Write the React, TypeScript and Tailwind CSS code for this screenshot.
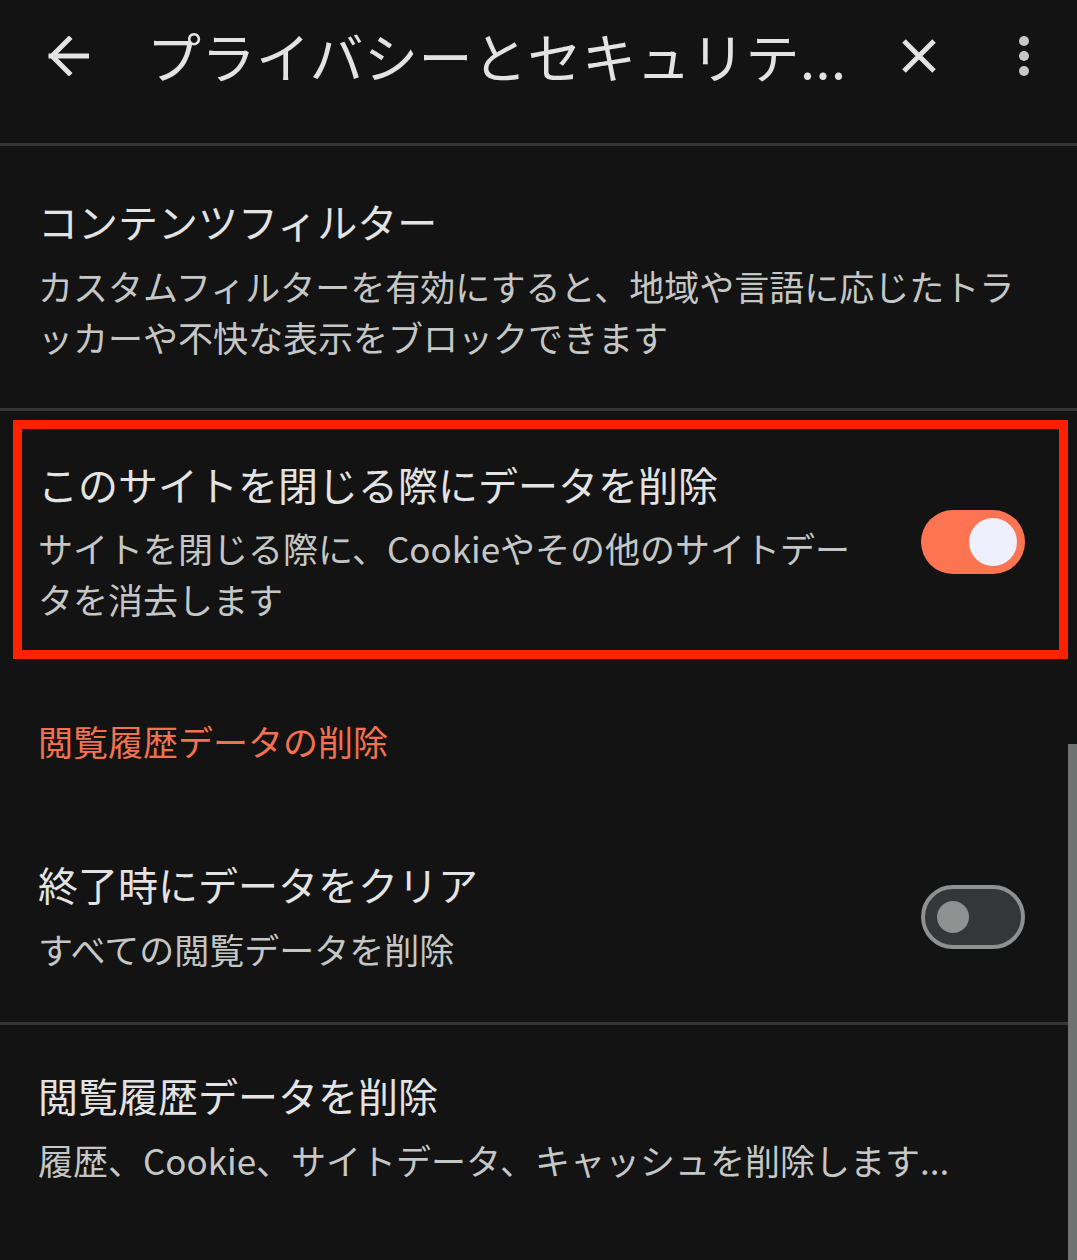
const FONT = "font-['Noto_Sans_CJK_JP','Noto_Sans',sans-serif]";

function Toggle({ on }: { on: boolean }) {
  if (on) {
    return (
      <div className="flex h-[64px] w-[104px] shrink-0 items-center justify-end rounded-full bg-[#fd7452] pr-[8px]">
        <div className="h-[48px] w-[48px] rounded-full bg-[#eff0fe]" />
      </div>
    );
  }
  return (
    <div className="flex h-[64px] w-[104px] shrink-0 items-center rounded-full border-[4px] border-[#8e918f] bg-[#353638] pl-[12px]">
      <div className="h-[32px] w-[32px] rounded-full bg-[#8e918f]" />
    </div>
  );
}

function Divider() {
  return <div className="h-[3px] w-full bg-[#363636]" />;
}

export default function App() {
  return (
    <main className={`relative min-h-[1260px] w-full overflow-hidden bg-[#131313] ${FONT}`}>
      <header className="flex h-[112px] items-center">
        <svg
          className="ml-[47px] shrink-0"
          width="42"
          height="40"
          viewBox="0 0 42 40"
          fill="none"
          stroke="#e3e3e3"
          strokeWidth="5"
          strokeLinecap="square"
        >
          <path d="M4 20 H40" />
          <path d="M22 3 L5 20 L22 37" />
        </svg>
        <h1 className="ml-[58px] w-[700px] shrink-0 whitespace-nowrap text-[54px] leading-[112px] tracking-[0.5px] text-[#e3e3e3]">
          プライバシーとセキュリテ...
        </h1>
        <svg
          className="ml-[54px] shrink-0"
          width="36"
          height="36"
          viewBox="0 0 36 36"
          fill="none"
          stroke="#e3e3e3"
          strokeWidth="5"
        >
          <path d="M3 3 L33 33 M33 3 L3 33" />
        </svg>
        <svg className="ml-[81px] shrink-0" width="12" height="42" viewBox="0 0 12 42" fill="#c8c8c8">
          <circle cx="6" cy="6" r="5" />
          <circle cx="6" cy="21" r="5" />
          <circle cx="6" cy="36" r="5" />
        </svg>
      </header>
      <div className="h-[31px]" />
      <Divider />

      <section className="pb-[46px] pl-[38px] pr-[40px] pt-[47px]">
        <h2 className="text-[40px] leading-[56px] text-[#e3e3e3]">コンテンツフィルター</h2>
        <p className="mt-[11px] text-[35px] leading-[51px] text-[#c4c7c5]">
          カスタムフィルターを有効にすると、地域や言語に応じたトラッカーや不快な表示をブロックできます
        </p>
      </section>
      <Divider />

      <div className="ml-[13px] mr-[9px] mt-[9px] border-[9px] border-[#ff2200]">
        <div className="flex items-center pb-[26px] pl-[16px] pr-[34px] pt-[27px]">
          <div className="w-[827px] shrink-0">
            <h2 className="text-[40px] leading-[56px] text-[#e3e3e3]">
              このサイトを閉じる際にデータを削除
            </h2>
            <p className="mt-[10px] text-[35px] leading-[51px] text-[#c4c7c5]">
              サイトを閉じる際に、Cookieやその他のサイトデータを消去します
            </p>
          </div>
          <div className="ml-auto pt-[3px]">
            <Toggle on />
          </div>
        </div>
      </div>

      <h3 className="mt-[57px] pl-[38px] text-[35px] leading-[50px] text-[#f4714f]">
        閲覧履歴データの削除
      </h3>

      <section className="flex items-center pb-[48px] pl-[38px] pr-[52px] pt-[90px]">
        <div className="flex-1">
          <h2 className="text-[40px] leading-[56px] text-[#e3e3e3]">終了時にデータをクリア</h2>
          <p className="mt-[11px] text-[35px] leading-[51px] text-[#c4c7c5]">すべての閲覧データを削除</p>
        </div>
        <div className="pt-[3px]">
          <Toggle on={false} />
        </div>
      </section>
      <Divider />

      <section className="pl-[38px] pr-[40px] pt-[42px]">
        <h2 className="text-[40px] leading-[56px] text-[#e3e3e3]">閲覧履歴データを削除</h2>
        <p className="mt-[11px] text-[35px] leading-[51px] text-[#c4c7c5]">
          履歴、Cookie、サイトデータ、キャッシュを削除します...
        </p>
      </section>

      <div className="absolute bottom-0 right-0 top-[744px] w-[9px] bg-[#707271]" />
    </main>
  );
}
